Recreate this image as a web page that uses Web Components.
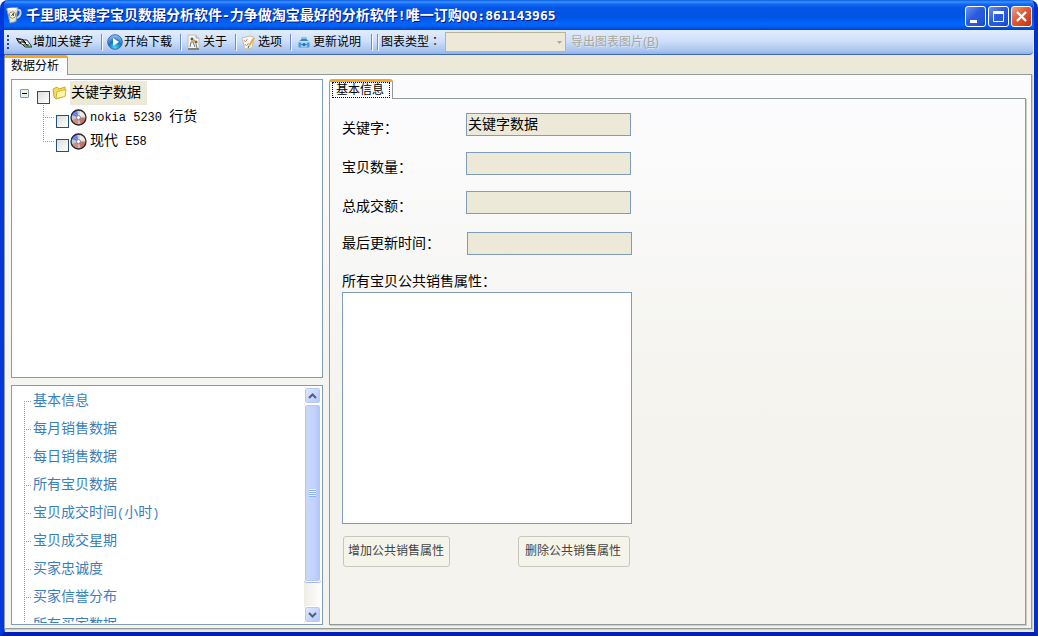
<!DOCTYPE html>
<html lang="zh-CN">
<head>
<meta charset="utf-8">
<title>千里眼关键字宝贝数据分析软件</title>
<style>
  html, body { height: 100%; margin: 0; background: #fff; }
  body { font: 14px/16px "Liberation Mono", "Noto Sans CJK SC", monospace; color: #000; }
</style>
</head>
<body>
<app-window>
  <title-bar slot="title"></title-bar>
  <tool-bar slot="tools"></tool-bar>
  <tab-panel slot="content" class="outer" label="数据分析">
    <main-split>
      <keyword-tree slot="tree"></keyword-tree>
      <report-list slot="reports"></report-list>
      <tab-panel slot="detail" label="基本信息" focused>
        <info-form></info-form>
      </tab-panel>
    </main-split>
  </tab-panel>
</app-window>

<script>
const define = (name, html, setup) => {
  const template = document.createElement('template');
  template.innerHTML = html;
  customElements.define(name, class extends HTMLElement {
    connectedCallback() {
      if (this.shadowRoot) return;
      this.attachShadow({ mode: 'open' }).append(template.content.cloneNode(true));
      if (setup) setup(this, this.shadowRoot);
    }
  });
};

define('app-window', `
<style>
  :host { display: flex; flex-direction: column; box-sizing: border-box; height: 100vh; overflow: hidden;
    border: 4px solid #0a3fe0; border-top: 0; border-color: #0a3fe0 #0030c8 #0020b8 #0038dc;
    border-radius: 8px 8px 0 0; background: #ece9d8;
    box-shadow: inset 1px 0 #1661ee; }
  ::slotted([slot=title]), ::slotted([slot=tools]) { flex: none; }
  ::slotted([slot=content]) { flex: 1; min-height: 0; margin: 0 2px 3px 0; }
</style>
<slot name="title"></slot><slot name="tools"></slot><slot name="content"></slot>`);

define('title-bar', `
<style>
  :host { display: flex; align-items: center; height: 30px; margin: 0 -4px; padding: 0 6px;
    background: linear-gradient(#0a5be0 0, #3a93ff 2px, #1268f5 4px, #0355e6 8px, #0053e3 16px, #0264fb 23px, #0262f6 26px, #0040c8 30px); }
  h1 { flex: 1; min-width: 0; margin: 0 0 0 4px; padding-top: 2px; font: bold 14px/18px "Liberation Mono", "Noto Sans CJK SC", monospace; color: #fff; text-shadow: 1px 1px #0a1883; white-space: nowrap; overflow: hidden; }
  h1 span { font: bold 13px/18px "DejaVu Sans Mono", monospace; }
  .buttons { display: flex; gap: 2px; padding-top: 2px; }
  button { width: 21px; height: 21px; padding: 0; border: 1px solid #fff; border-radius: 3px;
    background: linear-gradient(135deg, #6b93f0, #2a5be0 45%, #2458dc 70%, #1c46bd); }
  button.close { background: linear-gradient(135deg, #f0a183, #e05a36 45%, #d84820 70%, #b83412); }
  svg { display: block; flex: none; }
</style>
<svg width="16" height="18" viewBox="0 0 16 18" aria-hidden="true">
  <path d="M11 4c5-2 5 7-1 8" fill="none" stroke="#c8d5e8" stroke-width="2"/>
  <path d="M0.500 2.500l11-1 .5 2-1 3-1 9-6 1.500-2-9z" fill="#e4e4dc" stroke="#8a95a4"/>
  <ellipse cx="6" cy="3" rx="4.500" ry="1.200" fill="#fff"/>
  <circle cx="6.500" cy="9" r="3.200" fill="#f8f5dc" stroke="#9a9460"/><path d="M5.500 10l2-3v3" fill="none" stroke="#555"/>
</svg>
<h1>千里眼关键字宝贝数据分析软件<span>-</span>力争做淘宝最好的分析软件<span>!</span>唯一订购<span>QQ:861143965</span></h1>
<div class="buttons">
  <button aria-label="最小化"><svg width="19" height="19"><path d="M4 13h7v3H4z" fill="#fff"/></svg></button>
  <button aria-label="最大化"><svg width="19" height="19"><path d="M4.500 4.500h10v10h-10z" fill="none" stroke="#fff"/><path d="M4 4h11v3H4z" fill="#fff"/></svg></button>
  <button class="close" aria-label="关闭"><svg width="19" height="19"><path d="M5 5l9 9M14 5l-9 9" stroke="#fff" stroke-width="2.400"/></svg></button>
</div>`);

define('tool-bar', `
<style>
  :host { display: flex; align-items: center; box-sizing: border-box; height: 25px; padding: 0 0 1px 3px; margin-right: 1px;
    font-family: "Liberation Sans", "Noto Sans CJK SC", sans-serif; font-size: 12px; white-space: nowrap;
    background: linear-gradient(#e2edfd, #cfe0fa 45%, #a9c5f0 85%, #8fb1e6); border-bottom: 1px solid #4166b0; border-radius: 0 0 4px 0; }
  .grip { width: 2px; height: 14px; margin-right: 5px; background: repeating-linear-gradient(#27418a 0 2px, transparent 2px 4px); }
  button { display: flex; align-items: center; gap: 1px; height: 22px; padding: 0 2px; border: 0; background: none; font: inherit; color: #000; }
  button svg { flex: none; }
  i { width: 1px; height: 16px; margin: 0 3px 0 6px; background: #6a8ccb; box-shadow: 1px 1px #f4f8ff; }
  i.end { margin-right: 5px; margin-left: 8px; }
  i.start { margin-left: 0; margin-right: 3px; }
  label { font-family: "Liberation Sans", "Noto Sans CJK TC", sans-serif; width: 60px; margin-right: 4px; }
  .pick { position: relative; display: flex; width: 121px; height: 20px; margin-right: 3px; }
  select { appearance: none; width: 100%; border: 1px solid #b9b494; background: #ece9d8; border-radius: 0; margin: 0; opacity: 1; }
  .pick svg { position: absolute; right: 4px; top: 9px; }
  button:disabled { color: #aca899; text-shadow: 1px 1px #fff6; }
</style>
<span class="grip"></span>
<button><svg width="16" height="16"><path d="M1 5l4 0 3 1 3 0 3 4 2 3H9L6 10 3 9z" fill="#f5f5ec" stroke="#333"/><path d="M0 4.500l5 1 4 4M1 6l4 3M6 5l4 4M4 8h4M8 8l4 4M7 11h6" stroke="#111" fill="none"/><path d="M10 12.500h5" stroke="#4c8e55" stroke-width="2"/></svg>增加关键字</button><i></i>
<button><svg width="16" height="16"><defs><radialGradient id="p" cx=".5" cy=".9" r=".9"><stop stop-color="#43e0ff"/><stop offset=".5" stop-color="#1670c8"/><stop offset="1" stop-color="#a6c9ee"/></radialGradient></defs><circle cx="8" cy="8" r="7.300" fill="url(#p)" stroke="#3c69a4"/><path d="M6 4l6 4-6 4z" fill="#fff"/></svg>开始下载</button><i></i>
<button><svg width="16" height="16"><path d="M2 1h8l3 3v11H2z" fill="#f6f4ec" stroke="#c4c0b2"/><path d="M10 1v3h3" fill="#ddd" stroke="#aaa"/><circle cx="6" cy="5" r="1.500" fill="#555"/><circle cx="10" cy="8" r="1.500" fill="#666"/><path d="M4 13l1-5 2 0 2 5M10 10l1 4" fill="none" stroke="#777"/><path d="M7 8l2-2" stroke="#e2a22f" stroke-width="2"/><path d="M2 15h11" stroke="#85827a" stroke-width="2"/></svg>关于</button><i></i>
<button><svg width="16" height="16"><path d="M1 4l8-2 4 1-2 11-7 1z" fill="#fbfaf4" stroke="#c4bdae"/><path d="M3 6l1.500 2 2-3M4 10l1.500 2 2-3" stroke="#c58e86" fill="none"/><path d="M13 4L8 12" stroke="#edb03a" stroke-width="2"/><path d="M8 12l-1 2" stroke="#555"/></svg>选项</button><i></i>
<button><svg width="16" height="16"><path d="M2 8h12v6H2z" fill="#4b9ad7" stroke="#b8d8f1"/><path d="M3 7l2-1 1-3h4l1 3 2 1z" fill="#2f86cc"/><path d="M6 4h4M5 9h6M5 12h6" stroke="#e4f5ff"/><circle cx="8" cy="10.500" r="1.500" fill="#1d6bb4"/></svg>更新说明</button><i class="end"></i><i class="start"></i>
<label for="chart" lang="zh-TW">图表类型：</label>
<span class="pick"><select id="chart" disabled></select><svg width="5" height="3"><path d="M0 0h5L2.500 3z" fill="#aca899"/></svg></span>
<button disabled><span>导出图表图片(<u>B</u>)</span></button>`);

define('tab-panel', `
<style>
  :host { display: flex; flex-direction: column; min-width: 0; min-height: 0; }
  [role=tab] { position: relative; align-self: flex-start; height: 20px; margin: 0 0 -1px; padding: 0 5px 2px 6px;
    border: 1px solid #919b9c; border-top: 3px solid #f5a623; border-bottom: 0; border-radius: 3px 3px 0 0; background: #fcfcfe;
    font: 12px/14px "Liberation Sans", "Noto Sans CJK SC", sans-serif; width: 64px; white-space: nowrap; text-align: left; }
  :host([focused]) [role=tab]::after { content: ""; position: absolute; inset: 0 2px 1px; border: 1px dotted #000; }
  section { flex: 1; min-height: 0; border: 1px solid #919b9c; box-shadow: 1px 1px #d0cdbf;
    background: linear-gradient(#fcfcfe, #f4f3ee 60%); display: flex; flex-direction: column; }
  ::slotted(*) { flex: 1; min-height: 0; }
</style>
<button role="tab" aria-selected="true"></button>
<section role="tabpanel"><slot></slot></section>`, (host, root) => {
  root.querySelector('button').textContent = host.getAttribute('label');
});

define('main-split', `
<style>
  :host { display: grid; grid-template: 5fr 4fr / 312px minmax(0, 1fr); gap: 7px 6px; padding: 4px 5px 3px 6px; box-sizing: border-box; }
  ::slotted([slot=detail]) { grid-area: 1 / 2 / 3 / 3; }
  ::slotted([slot=tree]), ::slotted([slot=reports]) { min-height: 0; box-sizing: border-box; border: 1px solid #7f9db9; background: #fff; overflow: hidden; }
</style>
<slot name="tree"></slot><slot name="detail"></slot><slot name="reports"></slot>`);

define('disc-icon', `
<style>:host { display: block; width: 17px; height: 17px; } svg { display: block; }</style>
<svg width="17" height="17"><circle cx="8.500" cy="8.500" r="7.500" fill="#c9c4d6"/>
<path d="M8.500 8.500L1 6a8 8 0 0 1 6-5z" fill="#6c86e0"/><path d="M8.500 8.500L10 1a8 8 0 0 1 6 6z" fill="#f2ebe4"/>
<path d="M8.500 8.500L16 9a8 8 0 0 1-5 7z" fill="#c27860"/><path d="M8.500 8.500L8 16a8 8 0 0 1-6-5z" fill="#cf9078"/>
<circle cx="8.500" cy="8.500" r="7.500" fill="none" stroke="#2b2533" stroke-width="1.300"/><circle cx="8.500" cy="8.500" r="2" fill="#fff" stroke="#88849a"/></svg>`);

define('keyword-tree', `
<style>
  :host { display: block; padding: 1px 0 0 8px; }
  ul { list-style: none; margin: 0; padding: 0; }
  .row { display: flex; align-items: center; height: 24px; }
  .toggle { width: 9px; height: 9px; padding: 0; border: 1px solid #7b9ab8; border-radius: 1px; margin: 0 8px 0 0;
    background: linear-gradient(#000, #000) center / 5px 1px no-repeat #f1efe6; }
  input { appearance: none; flex: none; align-self: flex-end; box-sizing: border-box; width: 13px; height: 13px; margin: 0 2px 1px 0; border: 1px solid #1c5180;
    background: linear-gradient(135deg, #dcdcd7, #fff); }
  li li input { margin-right: 1px; }
  .root { line-height: 24px; background: #ece9d8; padding: 0 6px 0 1px; margin-left: 3px; }
  ul ul { margin-left: 23px; background: repeating-linear-gradient(#999 0 1px, transparent 1px 2px) 0 0 / 1px 37px no-repeat; }
  ul ul .row::before { content: ""; width: 12px; height: 1px; margin-right: 1px; background: repeating-linear-gradient(90deg, #999 0 1px, transparent 1px 2px); }
  label { white-space: pre; }
  li li label { padding-left: 3px; }
  li li span { font-size: 12px; }
</style>
<ul><li>
  <div class="row"><button class="toggle" aria-label="折叠"></button><input type="checkbox" id="root">
    <svg width="15" height="16" aria-hidden="true"><path d="M1 4l4-2 2 2 6-2 0 9-9 3-2-2z" fill="#f7dc5c" stroke="#d0a824"/><path d="M4 13.500l1-7 9-2-1 7z" fill="#fff6ae" stroke="#d8b330"/></svg>
    <label class="root" for="root">关键字数据</label></div>
  <ul>
    <li class="row"><input type="checkbox" id="nokia"><disc-icon></disc-icon><label for="nokia"><span>nokia 5230 </span>行货</label></li>
    <li class="row"><input type="checkbox" id="hyundai"><disc-icon></disc-icon><label for="hyundai">现代<span> E58</span></label></li>
  </ul>
</li></ul>`);

define('scroll-bar', `
<style>
  :host { display: flex; flex-direction: column; width: 17px; background: linear-gradient(90deg, #eeede5, #fefefb); }
  button { flex: none; height: 17px; padding: 0; border: 1px solid #fff; border-radius: 3px; background: linear-gradient(135deg, #e1eafe, #b0c6f8); box-shadow: inset 0 0 0 1px #b7c9f5; }
  button svg { display: block; margin: auto; }
  .track { flex: 1; }
  .thumb { height: 88%; box-sizing: border-box; border: 1px solid #fff; border-radius: 3px; background: linear-gradient(90deg, #c9d7fc, #c3d3fd 60%, #b0c5f8);
    box-shadow: inset 0 0 0 1px #b3c7f6, 0 1px #a4b9e8; display: grid; place-items: center; }
  .thumb::after { content: ""; width: 7px; height: 8px; background: repeating-linear-gradient(#eef4fe 0 1px, #8cb0f8 1px 2px); }
</style>
<button aria-label="向上"><svg width="9" height="6"><path d="M1 5l3.500-3.500L8 5" fill="none" stroke="#4d6185" stroke-width="2"/></svg></button>
<div class="track"><div class="thumb"></div></div>
<button aria-label="向下"><svg width="9" height="6"><path d="M1 1l3.500 3.500L8 1" fill="none" stroke="#4d6185" stroke-width="2"/></svg></button>`);

define('report-list', `
<style>
  :host { display: flex; padding: 1px; }
  ul { flex: 1; list-style: none; margin: 0; padding: 0 0 0 11px; overflow: hidden; }
  li { display: flex; align-items: center; height: 28px; background: repeating-linear-gradient(#999 0 1px, transparent 1px 2px) 0 0 / 1px 100% no-repeat; }
  li:first-child { background-position: 0 14px; }
  li::before { content: ""; width: 7px; height: 1px; margin-right: 2px; background: repeating-linear-gradient(90deg, #999 0 1px, transparent 1px 2px); }
  a { color: #3a7ebc; text-decoration: none; white-space: nowrap; }
  span { font-size: 12px; }
</style>
<ul>
  <li><a href="#info">基本信息</a></li>
  <li><a href="#month">每月销售数据</a></li>
  <li><a href="#day">每日销售数据</a></li>
  <li><a href="#items">所有宝贝数据</a></li>
  <li><a href="#hours">宝贝成交时间<span>(</span>小时<span>)</span></a></li>
  <li><a href="#week">宝贝成交星期</a></li>
  <li><a href="#loyalty">买家忠诚度</a></li>
  <li><a href="#credit">买家信誉分布</a></li>
  <li><a href="#buyers">所有买家数据</a></li>
</ul>
<scroll-bar></scroll-bar>`);

define('info-form', `
<style>
  :host { display: block; padding: 14px 12px 0; }
  form { width: 290px; max-width: 100%; }
  .fields { display: grid; grid-template-columns: 124px 1fr; gap: 16px 0; padding-right: 1px; }
  .fields label { align-self: end; line-height: 14px; }
  .updated { margin-top: 18px; padding-right: 0; grid-template-columns: 125px 1fr; }
  .updated label { align-self: center; }
  label { white-space: nowrap; }
  input { box-sizing: border-box; width: 100%; height: 23px; margin: 0; padding: 0 1px 3px; border: 1px solid #7f9db9; background: #ece9d8; font: inherit; color: #000; outline: 0; }
  .all { display: block; margin-top: 19px; line-height: 16px; }
  select { display: block; box-sizing: border-box; width: 100%; height: 232px; margin: 2px 0 12px; border: 1px solid #7f9db9; border-radius: 0; background: #fff; }
  .actions { display: flex; justify-content: space-between; padding: 0 2px 0 1px; }
  button { height: 31px; padding: 0 5px 2px 4px; border: 1px solid #c9c7ba; border-radius: 3px; background: #f5f4ea; color: #444;
    font: 12px/16px "Liberation Sans", "Noto Sans CJK SC", sans-serif; white-space: nowrap; }
  button + button { padding: 0 8px 2px 6px; }
</style>
<form>
  <div class="fields">
    <label for="kw">关键字：</label><input id="kw" value="关键字数据" readonly>
    <label for="count">宝贝数量：</label><input id="count" readonly>
    <label for="total">总成交额：</label><input id="total" readonly>
  </div>
  <div class="fields updated"><label for="time">最后更新时间：</label><input id="time" readonly></div>
  <label class="all" for="attrs">所有宝贝公共销售属性：</label>
  <select id="attrs" multiple></select>
  <div class="actions"><button type="button">增加公共销售属性</button><button type="button">删除公共销售属性</button></div>
</form>`);
</script>
</body>
</html>
